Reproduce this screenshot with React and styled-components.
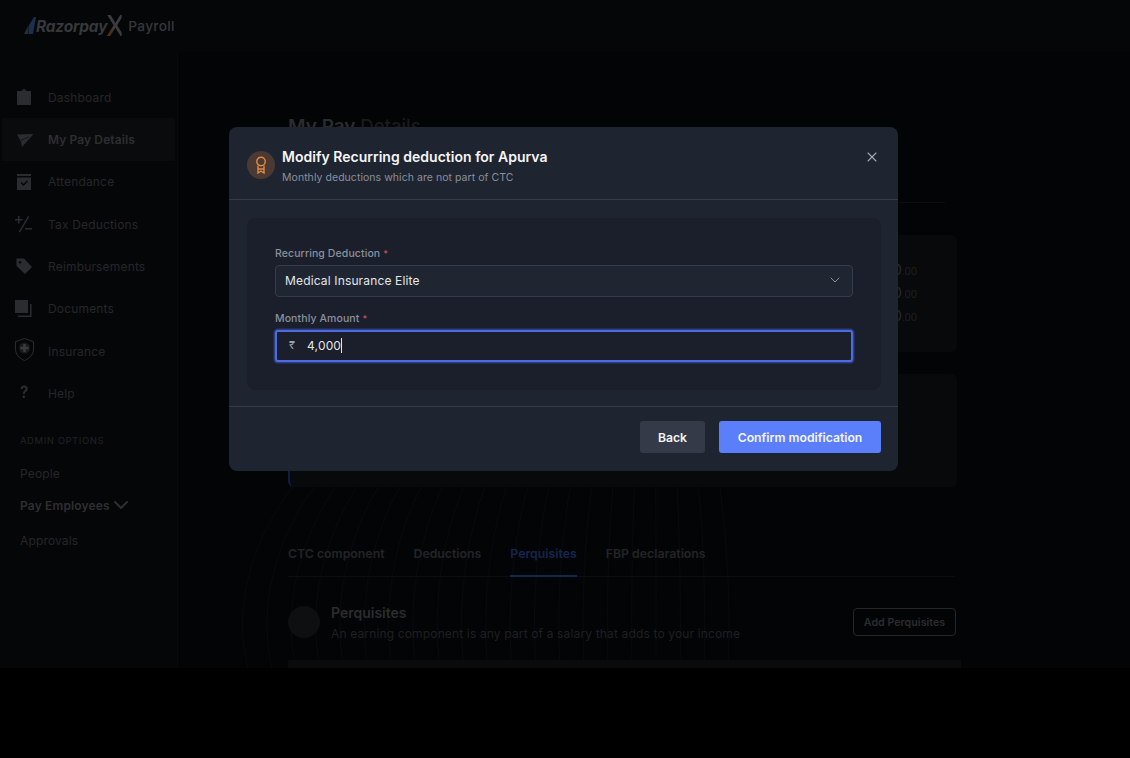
import React from "react";
import styled, { createGlobalStyle } from "styled-components";
import { ChevronDown, X } from "lucide-react";

const GlobalStyle = createGlobalStyle`
  html, body {
    margin: 0;
    padding: 0;
    background: #000;
  }
  body {
    font-family: "Inter", "Liberation Sans", sans-serif;
  }
`;

const Screen = styled.div`
  position: relative;
  width: 1130px;
  height: 758px;
  overflow: hidden;
  background: #000;
`;

const Page = styled.div`
  height: 668px;
  overflow: hidden;
  background: #050608;
  display: flex;
  flex-direction: column;
`;

const Header = styled.header`
  height: 52px;
  flex: none;
  display: flex;
  align-items: center;
  padding-left: 24px;
  box-sizing: border-box;
`;

const Logo = styled.div`
  display: flex;
  align-items: center;
  height: 26px;
`;

const LogoWord = styled.span`
  font-size: 15.5px;
  font-weight: 700;
  font-style: italic;
  color: #37383b;
  letter-spacing: -0.2px;
`;

const LogoX = styled.span`
  display: inline-block;
  width: 17px;
  margin-left: -1px;
  font-size: 29px;
  line-height: 26px;
  font-weight: 500;
  background: linear-gradient(45deg, #4a3018 0%, #4a3018 32%, #3b3c3f 46%);
  -webkit-background-clip: text;
  background-clip: text;
  color: transparent;
  transform: scaleX(0.92);
  transform-origin: left center;
  margin-right: 5px;
`;

const LogoProduct = styled.span`
  font-size: 13.7px;
  font-weight: 500;
  color: #37383b;
  letter-spacing: 0.3px;
`;

const Body = styled.div`
  flex: 1;
  display: flex;
  min-height: 0;
`;

const Sidebar = styled.nav`
  width: 178px;
  flex: none;
  box-sizing: border-box;
  padding: 24.1px 2px 0;
  background: #050608;
  border-right: 1px solid #08090b;
`;

const NavItem = styled.div`
  height: 42.3px;
  display: flex;
  align-items: center;
  padding-left: 12px;
  font-size: 12px;
  letter-spacing: ${(p) => (p.$active ? "0.1px" : "0.17px")};
  font-weight: ${(p) => (p.$active ? 600 : 400)};
  color: ${(p) => (p.$active ? "#2e2f32" : "#26272a")};
  background: ${(p) => (p.$active ? "#0a0b0d" : "transparent")};
`;

const NavIcon = styled.svg`
  width: 20px;
  height: 20px;
  flex: none;
  margin-right: 14px;
  fill: #2b2c2f;
  overflow: visible;
`;

const SideLabel = styled.div`
  margin: 17px 0 6px 18px;
  height: 20px;
  line-height: 20px;
  font-size: 9.5px;
  letter-spacing: 0.55px;
  color: #212225;
`;

const SideLink = styled.div`
  display: flex;
  align-items: center;
  margin-left: 18px;
  height: ${(p) => p.$h}px;
  font-size: 12px;
  letter-spacing: 0.15px;
  font-weight: ${(p) => (p.$bold ? 600 : 400)};
  color: ${(p) => (p.$bold ? "#2e2f32" : "#26272a")};
`;

const SideChevron = styled(ChevronDown)`
  margin-left: -1px;
`;

const Main = styled.main`
  position: relative;
  flex: 1;
  box-sizing: border-box;
  padding: 62px 173px 0 110px;
  background: #030406;
  min-width: 0;
`;

const Waves = styled.svg`
  position: absolute;
  left: 0;
  top: 0;
  width: 952px;
  height: 616px;
  fill: none;
  stroke: #090a0d;
  stroke-width: 1;
`;

const Content = styled.div`
  position: relative;
`;

const PageTitle = styled.h1`
  margin: 0;
  height: 24px;
  line-height: 24px;
  font-size: 19px;
  font-weight: 600;
  color: #2b2c2f;
`;

const TitleFade = styled.span`
  color: #1a1b1e;
  font-size: 18.5px;
  font-weight: 500;
`;

const Rule = styled.div`
  margin: 64px 12px 0 0;
  height: 1px;
  background: #0c0d0f;
`;

const Card = styled.section`
  margin-top: ${(p) => p.$top}px;
  height: ${(p) => p.$h}px;
  box-sizing: border-box;
  padding-top: 23px;
  padding-right: 40px;
  background: #08090b;
  border-radius: 6px;
`;

const CardAccent = styled(Card)`
  border-left: 2px solid #0f1d4c;
`;

const Amount = styled.div`
  height: 23px;
  line-height: 23px;
  text-align: right;
  font-size: 14px;
  color: #28292c;
`;

const Cents = styled.span`
  font-size: 10px;
  color: #1f2023;
`;

const Tabs = styled.div`
  margin-top: 55px;
  display: flex;
  gap: 29px;
  border-bottom: 1px solid #0c0d0f;
  margin-right: 2px;
`;

const Tab = styled.div`
  height: 35px;
  box-sizing: border-box;
  line-height: 24px;
  font-size: 12.3px;
  font-weight: 600;
  color: ${(p) => (p.$active ? "#162650" : "#232427")};
  border-bottom: 2px solid ${(p) => (p.$active ? "#162650" : "transparent")};
  margin-bottom: -1px;
`;

const SectionRow = styled.div`
  margin-top: 29px;
  height: 32px;
  display: flex;
  align-items: center;
  gap: 11px;
`;

const SectionDot = styled.div`
  width: 32px;
  height: 32px;
  border-radius: 50%;
  background: #0e0f11;
  flex: none;
`;

const SectionText = styled.div`
  flex: 1;
  margin-top: 2px;
`;

const SectionTitle = styled.div`
  font-size: 14px;
  line-height: 18px;
  font-weight: 600;
  color: #2b2c2f;
  margin-bottom: 3px;
`;

const SectionSub = styled.div`
  font-size: 12px;
  line-height: 18px;
  color: #1f2023;
  letter-spacing: 0.15px;
`;

const OutlineButton = styled.div`
  width: 103px;
  height: 28px;
  box-sizing: border-box;
  display: flex;
  align-items: center;
  justify-content: center;
  border: 1px solid #25262a;
  border-radius: 4px;
  font-size: 10.7px;
  font-weight: 600;
  color: #2b2c2f;
  margin-right: 1px;
`;

const TableHead = styled.div`
  margin-top: 22px;
  height: 30px;
  margin-right: -4px;
  background: #0a0b0d;
`;

/* modal lies over the dimmed page */
const Modal = styled.div`
  position: absolute;
  left: 229px;
  top: 127px;
  width: 669px;
  height: 344px;
  display: flex;
  flex-direction: column;
  background: #1e2430;
  border-radius: 8px;
`;

const ModalHeader = styled.div`
  height: 73px;
  flex: none;
  box-sizing: border-box;
  display: flex;
  align-items: center;
  gap: 7px;
  padding: 4px 18px 0 18px;
  border-bottom: 1px solid #353b49;
`;

const Badge = styled.div`
  width: 28px;
  height: 28px;
  flex: none;
  border-radius: 50%;
  background: #4b3a34;
  display: flex;
  align-items: center;
  justify-content: center;
`;

const HeaderText = styled.div`
  flex: 1;
  margin-top: 4px;
`;

const ModalTitle = styled.div`
  font-size: 14px;
  line-height: 20px;
  font-weight: 600;
  color: #f4f5f7;
  letter-spacing: 0.02px;
`;

const ModalSub = styled.div`
  font-size: 10.5px;
  line-height: 20px;
  padding-top: 1px;
  color: #8a909e;
  letter-spacing: 0.05px;
`;

const CloseButton = styled.button`
  width: 16px;
  height: 16px;
  padding: 0;
  border: 0;
  background: none;
  color: #a4a9b5;
  display: flex;
  align-self: flex-start;
  margin-top: 18px;
`;

const ModalBody = styled.div`
  flex: 1;
  padding: 18px 17px 16px 18px;
  display: flex;
`;

const FormPanel = styled.div`
  flex: 1;
  box-sizing: border-box;
  padding: 28px 28px 0;
  background: #1a1f2b;
  border-radius: 8px;
`;

const Label = styled.div`
  font-size: 10.5px;
  line-height: 16px;
  font-weight: 500;
  color: #8a909e;
  margin-bottom: 3px;
  letter-spacing: 0.1px;
`;

const Required = styled.span`
  color: #c9534f;
  margin-left: 3px;
  font-size: 9px;
`;

const SelectBox = styled.div`
  height: 32px;
  box-sizing: border-box;
  display: flex;
  align-items: center;
  justify-content: space-between;
  padding: 0 9px 2px;
  margin-bottom: 14px;
  border: 1px solid #363c4b;
  border-radius: 4px;
  background: #1f2531;
  font-size: 12px;
  color: #e4e6ea;
  letter-spacing: 0.15px;
`;

const InputBox = styled.div`
  height: 32px;
  box-sizing: border-box;
  display: flex;
  align-items: center;
  padding: 0 12px 2px;
  border: 2px solid #4c6ce0;
  border-radius: 3px;
  box-shadow: 0 0 0 1.5px #2c3c7c;
  background: #1a1f2b;
  font-size: 12px;
  color: #e4e6ea;
  letter-spacing: 0.15px;
`;

const Rupee = styled.span`
  color: #9ba1ae;
  font-size: 11px;
  margin-right: 12px;
`;

const Caret = styled.span`
  width: 1px;
  height: 15px;
  background: #e4e6ea;
`;

const ModalFooter = styled.div`
  height: 65px;
  flex: none;
  box-sizing: border-box;
  display: flex;
  justify-content: flex-end;
  align-items: flex-start;
  gap: 14px;
  padding: 14px 17px 0 0;
  border-top: 1px solid #353b49;
`;

const Button = styled.button`
  height: 32px;
  width: ${(p) => (p.$primary ? "162px" : "65px")};
  border: 0;
  padding: 0;
  border-radius: 3px;
  font-family: inherit;
  font-size: 12.2px;
  font-weight: 600;
  color: #f4f5f7;
  background: ${(p) => (p.$primary ? "#5b7ffb" : "#343a48")};
`;

const navItems = [
  {
    label: "Dashboard",
    icon: <path d="M3 4h4.5l2.5-2.5L12.5 4H17v14H3z" />,
  },
  {
    label: "My Pay Details",
    active: true,
    icon: (
      <path
        fillRule="evenodd"
        d="M3 4.5L19.5 4 8 17 7 11.5zM5.5 10.8l.5.5 9-4.300-.3-.4z"
      />
    ),
  },
  {
    label: "Attendance",
    icon: (
      <path
        fillRule="evenodd"
        d="M3 2h14v2H3zM3 5.5h14V18H3zM6.500 11l3 3 4.500-4.500-1-1-3.500 3.500-2-2z"
      />
    ),
  },
  {
    label: "Tax Deductions",
    icon: (
      <path d="M4 2h1.500v3H8.500v1.500h-3v3H4v-3H1V5h3zM14 2l1.300.7L6 18.500l-1.300-.7zM11 14h7v1.500h-7z" />
    ),
  },
  {
    label: "Reimbursements",
    icon: (
      <path
        fillRule="evenodd"
        d="M2.500 2.500h7.500l8 8.500-7 7-8.500-8zM6 5a1.300 1.300 0 1 0 .01 0z"
      />
    ),
  },
  {
    label: "Documents",
    icon: <path d="M1 1h13v13H1zM16 5h1.500v13H4v-1.500h12z" />,
  },
  {
    label: "Insurance",
    icon: (
      <>
        <path
          fill="none"
          stroke="#2b2c2f"
          strokeWidth="1"
          d="M10.500-2.500l9 3.200v7.300c0 5.500-3.800 9.300-9 11.500-5.200-2.200-9-6-9-11.500V.7z"
        />
        <circle cx="10.500" cy="7" r="5.500" fill="#1a1b1e" />
        <path
          fill="#3a3b3e"
          d="M9.300 3h2.400v2.800h2.800v2.400h-2.800V11H9.300V8.200H6.500V5.800h2.800z"
        />
      </>
    ),
  },
  {
    label: "Help",
    icon: (
      <path d="M6.500 6c0-2.200 1.600-3.500 3.700-3.500 2.200 0 3.600 1.300 3.600 3.200 0 2.800-3 2.900-3 5.300H8.800c0-3.300 2.800-3.400 2.800-5.200 0-.8-.6-1.400-1.500-1.400-.9 0-1.500.6-1.600 1.600zM8.700 12.500h2.200v2.500H8.700z" />
    ),
  },
];

const App = () => {
  return (
    <Screen>
      <GlobalStyle />
      <Page>
        <Header>
          <Logo>
            <svg width="12" height="18" viewBox="0 0 12 18">
              <path d="M0 17L4 9v8z" fill="#2a2b2e" />
              <path d="M10 0l2 0-3 17H4.500V9z" fill="#1b2f4f" />
            </svg>
            <LogoWord>Razorpay</LogoWord>
            <LogoX>X</LogoX>
            <LogoProduct>Payroll</LogoProduct>
          </Logo>
        </Header>
        <Body>
          <Sidebar>
            {navItems.map((item) => (
              <NavItem key={item.label} $active={item.active}>
                <NavIcon viewBox="0 0 20 20">{item.icon}</NavIcon>
                {item.label}
              </NavItem>
            ))}
            <SideLabel>ADMIN OPTIONS</SideLabel>
            <SideLink $h={32}>People</SideLink>
            <SideLink $h={32} $bold>
              Pay Employees
              <SideChevron size={24} strokeWidth={2} color="#2e2f32" />
            </SideLink>
            <SideLink $h={38}>Approvals</SideLink>
          </Sidebar>
          <Main>
            <Waves viewBox="0 0 952 616">
              {Array.from({ length: 21 }, (_, i) => {
                const x = 70 + i * 24;
                const lean = (476 - x) * 0.12;
                return (
                  <path
                    key={i}
                    d={`M${x} 616 C${x - lean * 0.3} 560 ${x} 490 ${x + lean} 430`}
                  />
                );
              })}
            </Waves>
            <Content>
              <PageTitle>
                My Pay <TitleFade>Details</TitleFade>
              </PageTitle>
              <Rule />
              <Card $top={32} $h={117}>
                <Amount>
                  0<Cents>.00</Cents>
                </Amount>
                <Amount>
                  0<Cents>.00</Cents>
                </Amount>
                <Amount>
                  0<Cents>.00</Cents>
                </Amount>
              </Card>
              <CardAccent $top={22} $h={113} />
              <Tabs>
                <Tab>CTC component</Tab>
                <Tab>Deductions</Tab>
                <Tab $active>Perquisites</Tab>
                <Tab>FBP declarations</Tab>
              </Tabs>
              <SectionRow>
                <SectionDot />
                <SectionText>
                  <SectionTitle>Perquisites</SectionTitle>
                  <SectionSub>
                    An earning component is any part of a salary that adds to your income
                  </SectionSub>
                </SectionText>
                <OutlineButton>Add Perquisites</OutlineButton>
              </SectionRow>
              <TableHead />
            </Content>
          </Main>
        </Body>
      </Page>
      <Modal>
        <ModalHeader>
          <Badge>
            <svg
              width="14"
              height="18"
              viewBox="0 0 14 18"
              fill="none"
              stroke="#e08a42"
              strokeWidth="1.4"
            >
              <circle cx="7" cy="5.5" r="4.2" />
              <path d="M4 9.500V17l3-2 3 2V9.500M4 13h6" />
            </svg>
          </Badge>
          <HeaderText>
            <ModalTitle>Modify Recurring deduction for Apurva</ModalTitle>
            <ModalSub>Monthly deductions which are not part of CTC</ModalSub>
          </HeaderText>
          <CloseButton>
            <X size={16} strokeWidth={1.6} />
          </CloseButton>
        </ModalHeader>
        <ModalBody>
          <FormPanel>
            <Label>
              Recurring Deduction<Required>*</Required>
            </Label>
            <SelectBox>
              Medical Insurance Elite
              <ChevronDown size={16} strokeWidth={1.5} color="#8a909e" />
            </SelectBox>
            <Label>
              Monthly Amount<Required>*</Required>
            </Label>
            <InputBox>
              <Rupee>₹</Rupee>
              4,000
              <Caret />
            </InputBox>
          </FormPanel>
        </ModalBody>
        <ModalFooter>
          <Button>Back</Button>
          <Button $primary>Confirm modification</Button>
        </ModalFooter>
      </Modal>
    </Screen>
  );
};

export default App;
